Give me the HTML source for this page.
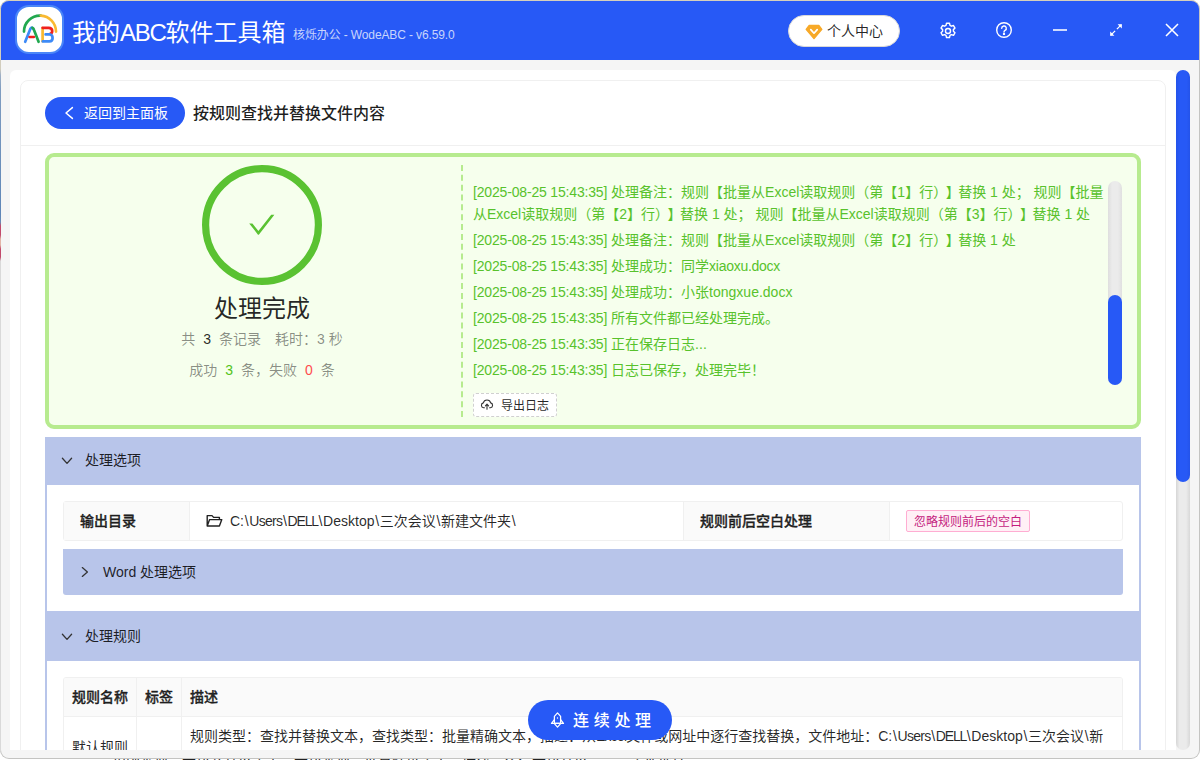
<!DOCTYPE html>
<html lang="zh-CN">
<head>
<meta charset="utf-8">
<title>我的ABC软件工具箱</title>
<style>
*{box-sizing:border-box;margin:0;padding:0}
html,body{width:1200px;height:760px;overflow:hidden;background:#fff}
body{font-family:"Liberation Sans","Noto Sans CJK SC",sans-serif;font-size:14px;color:rgba(0,0,0,.85);position:relative;text-spacing-trim:space-all}
.a{position:absolute;white-space:nowrap}
#deskL{z-index:2;left:0;top:9px;width:1px;height:742px;background:linear-gradient(#d6d0bc 0,#d2cdbd 60px,#9fb0c6 66px,#7f9cc0 80px,#5f86b8 205px,#6a8ab5 213px,#c24a6c 217px,#c24a6c 226px,#e3b5a8 230px,#e3b5a8 236px,#c24a6c 240px,#c24a6c 248px,#d9d9d9 252px,#d9d9d9 100%)}
#win{left:1px;top:1px;width:1198px;height:757px;background:#f5f5f5;border-radius:8px;box-shadow:0 0 0 1px #c4c4c2}
#tbar{left:1px;top:1px;width:1198px;height:59px;background:#2759f6;border-radius:8px 8px 0 0;box-shadow:0 -1px 0 0 #d6d0bc}
#panel{left:10px;top:70px;width:1166px;height:680px;background:#fff;border-radius:6px 6px 0 0;overflow:hidden}
#pg{left:-10px;top:-70px;width:1200px;height:760px}
#card{left:20px;top:80px;width:1146px;height:700px;border:1px solid #f0f0f0;border-radius:8px}
#hline{left:21px;top:145px;width:1144px;height:1px;background:#f0f0f0}

#logo{left:15.2px;top:5.2px;width:49px;height:49px;border-radius:14px;background:#fff;border:2px solid #4a86f8}
#ttl{left:72px;top:15px;font-size:24px;line-height:36px;color:#fff;letter-spacing:0}
#sub{left:293px;top:26px;font-size:12px;line-height:18px;color:rgba(255,255,255,.75);letter-spacing:-.12px}
#uc{left:788px;top:15px;width:112px;height:32px;border-radius:16px;background:#fff;border:1px solid #d9d9d9}
#uct{left:827px;top:20px;font-size:14px;line-height:22px;color:rgba(0,0,0,.85)}
.ti{stroke:#fff;fill:none}

#back{left:45px;top:97px;width:140px;height:32px;border-radius:16px;background:#2759f6}
#backt{left:84px;top:102px;font-size:14px;line-height:22px;color:#fff}
#ptitle{left:193px;top:100px;font-size:16px;line-height:28px;color:rgba(0,0,0,.88);font-weight:500}
#res{left:45px;top:153px;width:1096px;height:276px;border:4px solid #b7eb8f;border-radius:9px;background:#f6ffed}
#okt{left:162px;top:291px;width:200px;text-align:center;font-size:24px;line-height:36px;color:rgba(0,0,0,.85)}
.st{width:300px;left:112px;text-align:center;font-size:14px;line-height:22px;color:rgba(0,0,0,.45)}
.st b{font-weight:500;color:rgba(0,0,0,.85);margin:0 8px}
#vd{left:461px;top:165px;width:0;height:252px;border-left:2px dashed #b7eb8f}
.lg{left:473px;font-size:14px;line-height:22px;color:#58c22c;white-space:normal;width:636px}
#exp{left:473px;top:393px;width:84px;height:24px;border:1px dashed #d0d0d0;border-radius:3px;background:#fff}
#expt{left:501px;top:397px;font-size:12px;line-height:18px;color:rgba(0,0,0,.85)}
#ltr{left:1108px;top:181px;width:14px;height:204px;border-radius:7px;background:linear-gradient(90deg,#dedede,#ebebeb 30%,#ebebeb 70%,#e0e0e0)}
#lth{left:1108px;top:295px;width:14px;height:90px;border-radius:7px;background:#2759f6}

.sh{left:45px;width:1096px;height:48px;background:#b8c5ea}
.sb{left:45px;width:1096px;border-left:2px solid #b8c5ea;border-right:2px solid #b8c5ea;background:#fff}
.sht{left:85px;font-size:14px;line-height:22px;color:rgba(0,0,0,.85)}
#t1{left:63px;top:501px;width:1060px;height:40px;border:1px solid #f0f0f0;background:#fff;border-radius:3px}
.lc{background:#fafafa;border-right:1px solid #f0f0f0;height:38px;top:502px}
.lb{font-weight:500;-webkit-text-stroke:.35px rgba(0,0,0,.85);font-size:14px;line-height:22px;color:rgba(0,0,0,.85)}
#wbar{left:63px;top:549px;width:1060px;height:46px;background:#b8c5ea;border-radius:0 0 3px 3px}
#tag{left:906px;top:510px;width:124px;height:22px;border:1px solid #ffadd2;background:#fff0f6;border-radius:2px}
#tagt{left:914px;top:513px;font-size:12px;line-height:19px;color:#c41d7f}
#t2{left:63px;top:677px;width:1060px;height:120px;border:1px solid #f0f0f0;background:#fff;border-radius:3px 3px 0 0}
#t2h{left:64px;top:678px;width:1058px;height:39px;border-radius:2px 2px 0 0;background:#fafafa;border-bottom:1px solid #f0f0f0}
.vl{width:1px;background:#f0f0f0}
.ts{letter-spacing:-.17px}
.k{letter-spacing:-1.5px}
.bs{margin:0 .7px}
</style>
</head>
<body>
<div id="deskL" class="a"></div>
<div id="win" class="a"></div>
<div id="tbar" class="a"></div>


<div id="logo" class="a"></div>
<svg class="a" style="left:10px;top:0" width="60" height="60" viewBox="10 0 60 60" fill="none" stroke-width="2.7" stroke-linecap="round" stroke-linejoin="round">
  <path d="M24.0 31.6 A16.0 16.0 0 0 1 40.84 15.62" stroke="#21a84f"/>
  <path d="M40.84 15.62 A16.0 16.0 0 0 1 56.0 31.6" stroke="#f9b931"/>
  <path d="M25.2 41.8 L30.4 28.8 Q31.8 26.6 33.2 28.8" stroke="#3d8af7"/>
  <path d="M32.4 27.8 Q33.4 28 34 30 L38.6 41.8" stroke="#21a84f"/>
  <path d="M29.6 37 H33.8" stroke="#f0201c"/>
  <path d="M42.6 28 V41.2" stroke="#f9b931"/>
  <path d="M42.6 27.8 H48.6 Q52.2 27.8 52.2 31 Q52.2 33.2 50.6 33.6" stroke="#f0201c"/>
  <path d="M45.6 34.4 H49.6 Q52.6 34.6 52.6 38 Q52.6 41.4 49.4 41.4 H42.8" stroke="#3d8af7"/>
</svg>
<div id="ttl" class="a">我的<span style="letter-spacing:-1.3px">ABC</span>软件工具箱</div>
<div id="sub" class="a">核烁办公 - WodeABC - v6.59.0</div>
<div id="uc" class="a"></div>
<svg class="a" style="left:805px;top:24px" width="18" height="16" viewBox="0 0 18 16">
  <path d="M4.2 1.4 H13.8 L16.8 5.4 L9 14.6 L1.2 5.4 Z" fill="#f7a928" stroke="#f7a928" stroke-width="1.4" stroke-linejoin="round"/>
  <path d="M5.8 5.6 L9 9.2 L12.2 5.6" fill="none" stroke="#fff" stroke-width="1.7" stroke-linecap="round" stroke-linejoin="round"/>
</svg>
<div id="uct" class="a">个人中心</div>
<svg class="a ti" style="left:938.5px;top:21.6px" width="18" height="18" viewBox="0 0 17 17" stroke-width="1.35">
  <circle cx="8.5" cy="8.5" r="2.4"/>
  <path d="M7.1 1.2 h2.8 l.5 2 1.3.75 2-.6 1.4 2.4 -1.5 1.45 v1.5 l1.5 1.45 -1.4 2.4 -2-.6 -1.3.75 -.5 2 h-2.8 l-.5-2 -1.3-.75 -2 .6 -1.4-2.4 1.5-1.45 v-1.5 l-1.5-1.45 1.4-2.4 2 .6 1.3-.75z" stroke-linejoin="round"/>
</svg>
<svg class="a ti" style="left:995px;top:20.8px" width="18" height="18" viewBox="0 0 18 18" stroke-width="1.4">
  <circle cx="9" cy="9" r="7.3"/>
  <path d="M6.7 7.3 a2.3 2.3 0 1 1 3.3 2.1 c-.7.35-1 .8-1 1.6" stroke-linecap="round"/>
  <circle cx="9" cy="12.9" r=".5" fill="#fff"/>
</svg>
<div class="a" style="left:1053px;top:29px;width:14px;height:2px;background:rgba(255,255,255,.78)"></div>
<svg class="a ti" style="left:1109px;top:23px" width="14" height="14" viewBox="0 0 14 14" stroke-width="1.3">
  <path d="M1.6 12.4 L6.1 7.9 M7.9 6.1 L12.4 1.6" />
  <path d="M8.6 1.2 H12.8 V5.4 Z" fill="#fff" stroke="none"/>
  <path d="M1.2 8.6 V12.8 H5.4 Z" fill="#fff" stroke="none"/>
</svg>
<svg class="a ti" style="left:1165px;top:23px" width="14" height="14" viewBox="0 0 14 14" stroke-width="1.55">
  <path d="M1 1 L13 13 M13 1 L1 13"/>
</svg>

<div id="panel" class="a"><div id="pg" class="a">
  <div id="card" class="a"></div>
  <div id="hline" class="a"></div>

  <div id="back" class="a"></div>
  <svg class="a" style="left:64px;top:106px" width="10" height="14" viewBox="0 0 10 14"><path d="M8.4 1.6 L2 7 L8.4 12.4" fill="none" stroke="#fff" stroke-width="1.5" stroke-linecap="round" stroke-linejoin="round"/></svg>
  <div id="backt" class="a">返回到主面板</div>
  <div id="ptitle" class="a">按规则查找并替换文件内容</div>


  <div id="res" class="a"></div>
  <svg class="a" style="left:202px;top:165px" width="120" height="120" viewBox="0 0 120 120">
    <circle cx="60" cy="60" r="56.4" fill="none" stroke="#5ac232" stroke-width="7.2"/>
    <path d="M47.2 58.4 H50.4 L56.4 65.9 L69.2 49.8 H72.4 L57 69.4 Q56.4 70.2 55.8 69.4 Z" fill="#5ac232"/>
  </svg>
  <div id="okt" class="a">处理完成</div>
  <div class="a st" style="top:328px">共<b>3</b>条记录　耗时：3 秒</div>
  <div class="a st" style="top:359px">成功<b style="color:#52c41a">3</b>条，失败<b style="color:#ff4d4f">0</b>条</div>
  <div id="vd" class="a"></div>
  <div class="a lg" style="top:181px"><span class="ts">[2025-08-25 15:43:35]</span> 处理备注：规则【批量从Excel读取规则（第【1】行<span class="k">）】</span>替换 1 处； 规则【批量从Excel读取规则（第【2】行<span class="k">）】</span>替换 1 处； 规则【批量从Excel读取规则（第【3】行<span class="k">）】</span>替换 1 处</div>
  <div class="a lg" style="top:229px"><span class="ts">[2025-08-25 15:43:35]</span> 处理备注：规则【批量从Excel读取规则（第【2】行<span class="k">）】</span>替换 1 处</div>
  <div class="a lg" style="top:255px"><span class="ts">[2025-08-25 15:43:35]</span> 处理成功：同学<span style="letter-spacing:-.27px">xiaoxu.docx</span></div>
  <div class="a lg" style="top:281px"><span class="ts">[2025-08-25 15:43:35]</span> 处理成功：小张tongxue.docx</div>
  <div class="a lg" style="top:307px"><span class="ts">[2025-08-25 15:43:35]</span> 所有文件都已经处理完成。</div>
  <div class="a lg" style="top:333px"><span class="ts">[2025-08-25 15:43:35]</span> 正在保存日志...</div>
  <div class="a lg" style="top:359px"><span class="ts">[2025-08-25 15:43:35]</span> 日志已保存，处理完毕！</div>
  <div id="exp" class="a"></div>
  <svg class="a" style="left:480px;top:399px" width="14" height="12" viewBox="0 0 14 12"><path d="M4.4 8.8 H3.6 A2.5 2.5 0 0 1 3.3 3.9 A3.8 3.8 0 0 1 10.7 3.9 A2.5 2.5 0 0 1 10.4 8.8 H9.6" fill="none" stroke="#333" stroke-width="1.1" stroke-linecap="round"/><path d="M7 10.2 V5.4 M5.4 6.8 L7 5.2 L8.6 6.8" fill="none" stroke="#333" stroke-width="1.1" stroke-linecap="round" stroke-linejoin="round"/></svg>
  <div id="expt" class="a">导出日志</div>
  <div id="ltr" class="a"></div>
  <div id="lth" class="a"></div>


  <div class="a sh" style="top:437px"></div>
  <svg class="a" style="left:61px;top:455.5px" width="12" height="10" viewBox="0 0 12 10"><path d="M1.4 2.2 L6 7.4 L10.6 2.2" fill="none" stroke="#333" stroke-width="1.3" stroke-linecap="round" stroke-linejoin="round"/></svg>
  <div class="a sht" style="top:449px">处理选项</div>
  <div class="a sb" style="top:485px;height:126px"></div>
  <div id="t1" class="a"></div>
  <div class="a lc" style="left:64px;width:126px"></div>
  <div class="a lc" style="left:683px;width:207px;border-left:1px solid #f0f0f0"></div>
  <div class="a lb" style="left:80px;top:510px">输出目录</div>
  <svg class="a" style="left:205.5px;top:513.5px" width="17" height="14" viewBox="0 0 17 14"><path d="M1.2 12 V1.6 H6 L7.6 3.4 H13.4 V5.6 M1.2 12 L3.6 5.6 H15.8 L13.4 12 Z" fill="none" stroke="#222" stroke-width="1.4" stroke-linejoin="round"/></svg>
  <div class="a" style="left:230px;top:510px;font-size:14px;line-height:22px;">C:<span class="bs">\</span><span style="letter-spacing:-.7px">Users</span><span class="bs">\</span><span style="letter-spacing:-1.2px">DELL</span><span class="bs">\</span>Desktop<span class="bs">\</span>三次会议<span class="bs">\</span>新建文件夹<span class="bs">\</span></div>
  <div class="a lb" style="left:700px;top:510px">规则前后空白处理</div>
  <div id="tag" class="a"></div>
  <div id="tagt" class="a">忽略规则前后的空白</div>
  <div id="wbar" class="a"></div>
  <svg class="a" style="left:80px;top:566px" width="10" height="12" viewBox="0 0 10 12"><path d="M2.3 1.6 L7.4 6 L2.3 10.4" fill="none" stroke="#333" stroke-width="1.3" stroke-linecap="round" stroke-linejoin="round"/></svg>
  <div class="a sht" style="left:103px;top:561px">Word 处理选项</div>


  <div class="a sh" style="top:611px;height:49.5px"></div>
  <svg class="a" style="left:61px;top:631.5px" width="12" height="10" viewBox="0 0 12 10"><path d="M1.4 2.2 L6 7.4 L10.6 2.2" fill="none" stroke="#333" stroke-width="1.3" stroke-linecap="round" stroke-linejoin="round"/></svg>
  <div class="a sht" style="top:625px">处理规则</div>
  <div class="a sb" style="top:660.5px;height:120px"></div>
  <div id="t2" class="a"></div>
  <div id="t2h" class="a"></div>
  <div class="a vl" style="left:136px;top:678px;height:100px"></div>
  <div class="a vl" style="left:181px;top:678px;height:100px"></div>
  <div class="a lb" style="left:72px;top:686px">规则名称</div>
  <div class="a lb" style="left:145px;top:686px">标签</div>
  <div class="a lb" style="left:190px;top:686px">描述</div>
  <div class="a" style="left:72px;top:736px;font-size:14px;line-height:22px">默认规则</div>
  <div class="a" style="left:190px;top:725px;font-size:14px;line-height:22px">规则类型：查找并替换文本，查找类型：批量精确文本，描述：从<span style="letter-spacing:-.8px">Excel</span>文件或网址中逐行查找替换，文件地址：C:<span class="bs">\</span><span style="letter-spacing:-.7px">Users</span><span class="bs">\</span><span style="letter-spacing:-1.2px">DELL</span><span class="bs">\</span>Desktop<span class="bs">\</span>三次会议<span class="bs">\</span>新</div>

</div></div>

<div class="a" style="left:1176px;top:70px;width:14px;height:680px;border-radius:7px;background:linear-gradient(90deg,#d6d6d6,#ebebeb 25%,#ebebeb 72%,#d8d8d8)"></div>
<div class="a" style="left:1176px;top:70px;width:14px;height:412px;border-radius:7px;background:linear-gradient(90deg,#2453ea,#2759f6 25%,#2759f6 75%,#2453ea)"></div>


<div class="a" style="left:528px;top:700px;width:144px;height:40px;border-radius:20px;background:#2759f6"></div>
<svg class="a" style="left:548px;top:710px" width="20" height="20" viewBox="548 710 20 20" fill="none" stroke="#fff" stroke-width="1.25" stroke-linejoin="round" stroke-linecap="round"><path d="M557.5 712.9 L560.6 716.3 V723.4 H554.4 V716.3 Z"/><path d="M554.4 719.6 L551.5 723.4 H563.5 L560.6 719.6"/><path d="M554.6 723.9 L557.5 727.2 L560.4 723.9"/><circle cx="557.5" cy="718" r=".7" fill="#fff" stroke="none"/></svg>
<div class="a" style="left:573px;top:708.5px;font-size:16px;line-height:24px;color:#fff;letter-spacing:4.7px;font-weight:500">连续处理</div>

<div class="a" style="left:112px;top:759px;width:1000px;height:1px;overflow:hidden;font-size:14px;line-height:14px;color:#222"><div class="a" style="left:0;top:-2px">规则类型：查找并替换文本，查找类型：批量精确文本，描述：逐行查找替换　　　文件地址</div></div>
</body>
</html>
